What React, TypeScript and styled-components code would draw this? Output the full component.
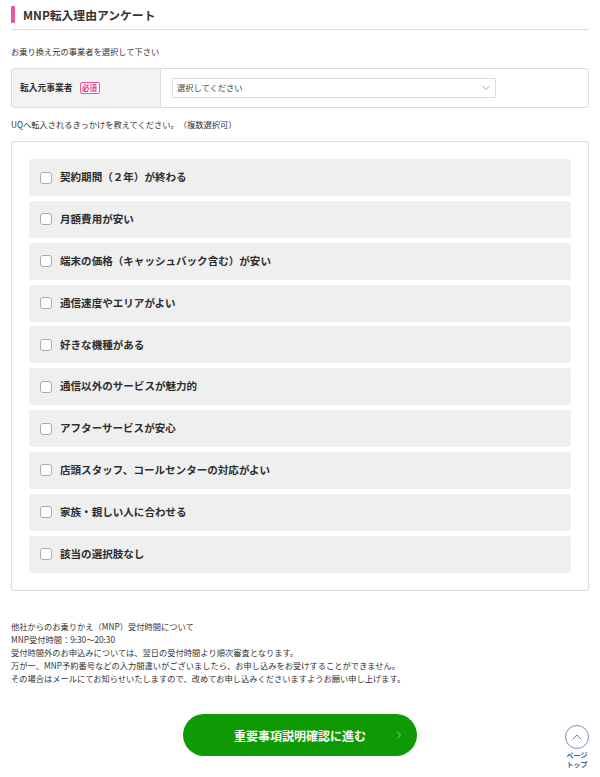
import React from "react";
import styled, { createGlobalStyle } from "styled-components";
import { ChevronDown, ChevronRight, ChevronUp } from "lucide-react";

const GlobalStyle = createGlobalStyle`
html, body {
  margin: 0;
  padding: 0;
  background: #fff;
}
body {
  font-family: "Noto Sans CJK JP", "Noto Sans", sans-serif;
  color: #333;
  text-spacing-trim: space-all;
}
`;

const Page = styled.div`
  position: relative;
  width: 600px;
  height: 777px;
  overflow: hidden;
  box-sizing: border-box;
  padding: 0 11px;
`;

const Title = styled.h2`
  display: flex;
  align-items: center;
  gap: 8px;
  height: 29px;
  margin: 0;
  border-bottom: 1px solid #ddd;
  font-size: 11.8px;
  line-height: 16px;
  font-weight: 700;
  color: #333;
  &::before {
    content: "";
    width: 4px;
    height: 17px;
    margin-top: -1px;
    border-radius: 1px;
    background: #f0569c;
  }
`;

const Note = styled.p`
  margin: 0;
  font-size: 8.25px;
  line-height: 13px;
  color: #333;
`;

const IntroNote = styled(Note)`
  margin-top: 15px;
`;

const CarrierRow = styled.div`
  display: flex;
  height: 40px;
  box-sizing: border-box;
  margin-top: 10px;
  border: 1px solid #ddd;
  border-radius: 3px;
  overflow: hidden;
`;

const CarrierLabel = styled.div`
  display: flex;
  align-items: center;
  gap: 7px;
  width: 149px;
  box-sizing: border-box;
  padding: 0 0 1px 8px;
  background: #f3f3f3;
  border-right: 1px solid #ddd;
  font-size: 8.75px;
  font-weight: 700;
`;

const RequiredBadge = styled.span`
  display: inline-flex;
  align-items: center;
  justify-content: center;
  width: 20px;
  height: 12px;
  box-sizing: border-box;
  border: 1px solid #f0569c;
  border-radius: 2px;
  background: #fff;
  color: #e8348a;
  font-size: 7.5px;
  font-weight: 700;
`;

const CarrierField = styled.div`
  display: flex;
  align-items: center;
  flex: 1;
  padding-left: 11px;
`;

const SelectBox = styled.div`
  display: flex;
  align-items: center;
  justify-content: space-between;
  width: 324px;
  height: 20px;
  box-sizing: border-box;
  padding: 0 3px 1px 4px;
  border: 1px solid #ddd;
  font-size: 8.25px;
  color: #444;
`;

const SelectText = styled.span`
  padding-bottom: 1px;
`;

const ReasonNote = styled(Note)`
  margin-top: 10px;
`;

const ReasonBox = styled.div`
  display: flex;
  flex-direction: column;
  gap: 4.85px;
  height: 450px;
  box-sizing: border-box;
  margin-top: 10px;
  padding: 17px 17px 0;
  border: 1px solid #ddd;
  border-radius: 3px;
`;

const Reason = styled.label`
  display: flex;
  align-items: center;
  gap: 8.5px;
  height: 37px;
  flex: none;
  box-sizing: border-box;
  padding: 0 0 1.5px 10.5px;
  background: #efefef;
  border-radius: 3px;
  font-size: 10.55px;
  font-weight: 700;
  color: #2e2e2e;
`;

const Check = styled.span`
  width: 12px;
  height: 12px;
  margin-top: 1.5px;
  box-sizing: border-box;
  border: 1.5px solid #aaa;
  border-radius: 3px;
  background: #fff;
`;

const Notice = styled(Note)`
  margin-top: 29px;
`;

const ButtonRow = styled.div`
  display: flex;
  justify-content: center;
  margin-top: 29px;
`;

const NextButton = styled.button`
  position: relative;
  width: 234px;
  height: 42px;
  padding: 0;
  border: 0;
  border-radius: 21px;
  background: #0f9a05;
  color: #fff;
  font-family: inherit;
  font-size: 12px;
  font-weight: 700;
`;

const NextArrow = styled.span`
  position: absolute;
  right: 12px;
  top: 15px;
  display: flex;
  color: #e6f5e4;
`;

const PageTop = styled.a`
  position: absolute;
  right: 11px;
  bottom: 8px;
  display: flex;
  flex-direction: column;
  align-items: center;
  width: 24px;
  color: #3a5cab;
  font-size: 7px;
  font-weight: 700;
  line-height: 9px;
  text-align: center;
`;

const PageTopCircle = styled.span`
  display: flex;
  align-items: center;
  justify-content: center;
  width: 24px;
  height: 24px;
  box-sizing: border-box;
  margin-bottom: 2px;
  border: 1px solid #6f8bd0;
  border-radius: 50%;
  background: #fff;
`;

const reasons = [
  "契約期間（２年）が終わる",
  "月額費用が安い",
  "端末の価格（キャッシュバック含む）が安い",
  "通信速度やエリアがよい",
  "好きな機種がある",
  "通信以外のサービスが魅力的",
  "アフターサービスが安心",
  "店頭スタッフ、コールセンターの対応がよい",
  "家族・親しい人に合わせる",
  "該当の選択肢なし",
];

const App = () => {
  return (
    <Page>
      <GlobalStyle />
      <Title>MNP転入理由アンケート</Title>
      <IntroNote>お乗り換え元の事業者を選択して下さい</IntroNote>
      <CarrierRow>
        <CarrierLabel>
          転入元事業者
          <RequiredBadge>必須</RequiredBadge>
        </CarrierLabel>
        <CarrierField>
          <SelectBox>
            <SelectText>選択してください</SelectText>
            <ChevronDown size={12} strokeWidth={1.4} color="#777" />
          </SelectBox>
        </CarrierField>
      </CarrierRow>
      <ReasonNote>UQへ転入されるきっかけを教えてください。（複数選択可）</ReasonNote>
      <ReasonBox>
        {reasons.map((reason) => (
          <Reason key={reason}>
            <Check />
            {reason}
          </Reason>
        ))}
      </ReasonBox>
      <Notice>
        他社からのお乗りかえ（MNP）受付時間について
        <br />
        MNP受付時間：9:30～20:30
        <br />
        受付時間外のお申込みについては、翌日の受付時間より順次審査となります。
        <br />
        万が一、MNP予約番号などの入力間違いがございましたら、お申し込みをお受けすることができません。
        <br />
        その場合はメールにてお知らせいたしますので、改めてお申し込みくださいますようお願い申し上げます。
      </Notice>
      <ButtonRow>
        <NextButton>
          重要事項説明確認に進む
          <NextArrow>
            <ChevronRight size={12} strokeWidth={1.2} />
          </NextArrow>
        </NextButton>
      </ButtonRow>
      <PageTop>
        <PageTopCircle>
          <ChevronUp size={16} strokeWidth={1.2} color="#4a68b5" />
        </PageTopCircle>
        ページ
        <br />
        トップ
      </PageTop>
    </Page>
  );
};

export default App;
